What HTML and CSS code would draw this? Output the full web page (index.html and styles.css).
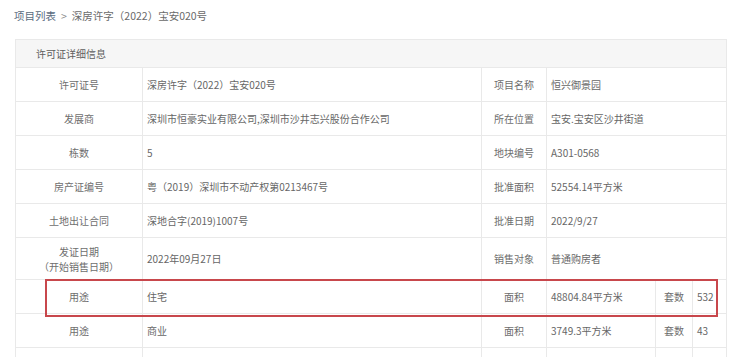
FILE: index.html
```html
<!DOCTYPE html>
<html lang="zh-CN">
<head>
<meta charset="utf-8">
<title>许可证详细信息</title>
<link rel="stylesheet" href="styles.css">
</head>
<body>
<div class="crumb"><a class="crumb-link" href="#">项目列表</a><span class="sep">&gt;</span><span>深房许字（2022）宝安020号</span></div>
<div class="wrap">
<table class="info">
<colgroup>
<col class="c1"><col class="c2"><col class="c3"><col class="c4"><col class="c5"><col class="c6">
</colgroup>
<thead>
<tr class="head"><th colspan="6">许可证详细信息</th></tr>
</thead>
<tbody>
<tr><td class="lbl">许可证号</td><td>深房许字（2022）宝安020号</td><td class="lbl">项目名称</td><td colspan="3">恒兴御景园</td></tr>
<tr><td class="lbl">发展商</td><td>深圳市恒豪实业有限公司,深圳市沙井志兴股份合作公司</td><td class="lbl">所在位置</td><td colspan="3">宝安.宝安区沙井街道</td></tr>
<tr><td class="lbl">栋数</td><td>5</td><td class="lbl">地块编号</td><td colspan="3">A301-0568</td></tr>
<tr><td class="lbl">房产证编号</td><td>粤（2019）深圳市不动产权第0213467号</td><td class="lbl">批准面积</td><td colspan="3">52554.14平方米</td></tr>
<tr><td class="lbl">土地出让合同</td><td>深地合字(2019)1007号</td><td class="lbl">批准日期</td><td colspan="3">2022/9/27</td></tr>
<tr class="tall"><td class="lbl">发证日期<br>（开始销售日期）</td><td>2022年09月27日</td><td class="lbl">销售对象</td><td colspan="3">普通购房者</td></tr>
<tr><td class="lbl">用途</td><td>住宅</td><td class="lbl">面积</td><td>48804.84平方米</td><td class="lbl">套数</td><td>532</td></tr>
<tr><td class="lbl">用途</td><td>商业</td><td class="lbl">面积</td><td>3749.3平方米</td><td class="lbl">套数</td><td>43</td></tr>
<tr><td class="lbl"></td><td></td><td class="lbl"></td><td></td><td class="lbl"></td><td></td></tr>
</tbody>
</table>
<div class="mark"></div>
</div>
</body>
</html>
```
FILE: styles.css
```css
html, body {
  margin: 0;
  padding: 0;
  background: #fff;
}
body {
  font-family: "Noto Sans CJK SC", "Microsoft YaHei", sans-serif;
  color: #6a6a6a;
  font-size: 10px;
}
.crumb {
  height: 16px;
  line-height: 16px;
  padding: 8px 0 0 14px;
  font-size: 10.5px;
  color: #6a6a6a;
}
.crumb-link {
  color: #5a6b80;
  text-decoration: none;
}
.sep {
  margin: 0 5px;
  color: #888;
}
.wrap {
  position: relative;
  margin: 15px 0 0 15px;
  width: 711px;
}
.info {
  width: 711px;
  border-collapse: collapse;
  table-layout: fixed;
}
.c1 { width: 127px; }
.c2 { width: 339px; }
.c3 { width: 65px; }
.c4 { width: 109px; }
.c5 { width: 37px; }
.c6 { width: 34px; }
.info th,
.info td {
  border: 1px solid #e9e9e9;
  padding: 0 4px;
  font-weight: normal;
  vertical-align: middle;
  line-height: 13px;
  white-space: nowrap;
  overflow: hidden;
}
.head th {
  height: 27px;
  background: #f6f6f6;
  text-align: left;
  padding-left: 20px;
  color: #5e5e5e;
}
.info td {
  height: 33px;
  color: #666;
}
.info .tall td {
  height: 41px;
  line-height: 15px;
}
.info td.lbl {
  text-align: center;
  color: #6e6e6e;
}
.mark {
  position: absolute;
  left: 30px;
  top: 240px;
  width: 669px;
  height: 34px;
  border: 2px solid #c8474c;
  pointer-events: none;
}
```
